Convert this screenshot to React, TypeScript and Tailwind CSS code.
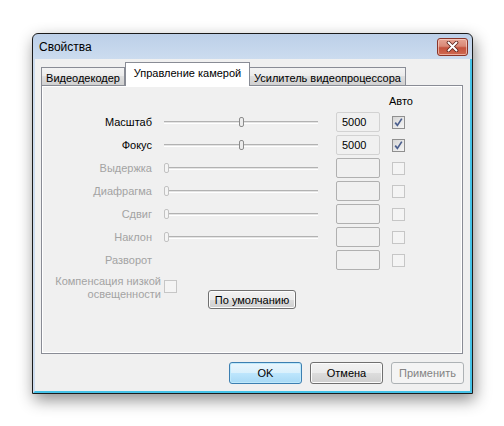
import React from "react";

interface RowInterface {
    label: string;
    enabled: boolean;
    slider: boolean;
    value?: string;
    thumb?: number;
    checked?: boolean;
}

const rows: RowInterface[] = [
    { label: "Масштаб", enabled: true, slider: true, value: "5000", thumb: 75, checked: true },
    { label: "Фокус", enabled: true, slider: true, value: "5000", thumb: 75, checked: true },
    { label: "Выдержка", enabled: false, slider: true },
    { label: "Диафрагма", enabled: false, slider: true },
    { label: "Сдвиг", enabled: false, slider: true },
    { label: "Наклон", enabled: false, slider: true },
    { label: "Разворот", enabled: false, slider: false },
];

const CheckBox = ({ checked, enabled }: { checked?: boolean; enabled: boolean }) => {
    if (!enabled) {
        return <div className="w-[13px] h-[13px] border border-[#c6c6c6] bg-[#f4f4f4]" />;
    }
    return (
        <div className="w-[13px] h-[13px] border border-[#8f8f8f] bg-gradient-to-br from-[#d6d6d6] to-[#f6f6f6] flex items-center justify-center">
            {checked && (
                <svg width="11" height="11" viewBox="0 0 11 11">
                    <path d="M2.2 5.6 L4.4 8.4 L8.8 1.6" fill="none" stroke="#4b5f8e" strokeWidth="1.7" />
                </svg>
            )}
        </div>
    );
};

const Slider = ({ thumb, enabled }: { thumb: number; enabled: boolean }) => (
    <div className="relative w-[154px] h-[20px] flex items-center">
        <div className="w-full h-[3px] border-t border-t-[#b2b2b2] border-b border-b-white bg-[#e4e4e4]" />
        {/* ползунок */}
        <div
            className={
                "absolute top-[5px] w-[5px] h-[10px] rounded-[2px] border " +
                (enabled ? "border-[#8c8c8c] bg-[#ececec]" : "border-[#c2c2c2] bg-[#f4f4f4]")
            }
            style={{ left: thumb }}
        />
    </div>
);

const WinButton = ({ label, kind, className }: { label: string; kind: "normal" | "default" | "disabled"; className?: string }) => {
    const look =
        kind === "default"
            ? "border-[#3c7fb1] bg-[linear-gradient(#eaf6fd_0%,#d9f0fc_50%,#bee6fd_50%,#a7d9f5_100%)] text-black shadow-[inset_0_0_0_1px_#bfe9fb]"
            : kind === "disabled"
            ? "border-[#adb2b5] bg-[#f4f4f4] text-[#838383]"
            : "border-[#707070] bg-[linear-gradient(#f2f2f2_0%,#ebebeb_50%,#dddddd_50%,#cfcfcf_100%)] text-black shadow-[inset_0_0_0_1px_#fcfcfc]";
    return (
        <div className={"flex items-center justify-center whitespace-nowrap border rounded-[3px] leading-[14px] " + look + " " + (className ?? "")}>
            {label}
        </div>
    );
};

const tabLook = "border border-b-0 border-[#898c95] flex justify-center pt-[3px] leading-[14px] whitespace-nowrap text-black";
const tabIdle = "h-[18px] bg-[linear-gradient(#f3f3f3_0%,#ebebeb_50%,#dedede_50%,#d0d0d0_100%)]";

const App = () => {
    return (
        <div className="w-[504px] h-[426px] bg-white pt-[33px] pl-[32px] font-['Liberation_Sans',Arial,sans-serif] text-[11px] overflow-hidden">
            <div className="w-[441px] h-[361px] border border-[#1b1b1b] rounded-t-[6px] bg-[linear-gradient(#bccfe8,#d5e3f3_40px)] shadow-[2px_6px_16px_rgba(0,0,0,0.45)] flex flex-col">
                {/* Заголовок */}
                <div className="h-[25px] flex items-center pl-[6px] pr-[4px]">
                    <span className="text-black text-[12px] leading-[14px]">Свойства</span>
                    <div className="ml-auto w-[31px] h-[18px] rounded-[3px] border border-[#8a3529] bg-[linear-gradient(#e6a595_0%,#d98876_45%,#c4523d_55%,#cf6a52_100%)] shadow-[inset_0_0_0_1px_rgba(255,220,210,0.6)] flex items-center justify-center">
                        <svg width="13" height="11" viewBox="0 0 13 11">
                            <path d="M2.5 1.5 L10.5 9.5 M10.5 1.5 L2.5 9.5" stroke="#5a2019" strokeWidth="3.6" strokeLinecap="round" />
                            <path d="M2.5 1.5 L10.5 9.5 M10.5 1.5 L2.5 9.5" stroke="#ffffff" strokeWidth="2" strokeLinecap="round" />
                        </svg>
                    </div>
                </div>

                {/* Клиентская область */}
                <div className="flex-1 flex flex-col bg-[#f0f0f0] border-l-2 border-l-[#cddcee] border-r-2 border-r-[#45c2e7] border-b-2 border-b-[#45c2e7]">
                    {/* Вкладки */}
                    <div className="h-[26px] flex items-end pl-[6px]">
                        <div className={tabLook + " " + tabIdle + " w-[84px]"}>Видеодекодер</div>
                        <div className={tabLook + " relative z-10 w-[125px] h-[24px] -mb-[1px] bg-white"}>Управление камерой</div>
                        <div className={tabLook + " " + tabIdle + " w-[156px] border-l-0"}>Усилитель видеопроцессора</div>
                    </div>

                    {/* Панель */}
                    <div className="ml-[6px] w-[422px] h-[269px] border border-[#898c95] shadow-[inset_0_0_0_1px_#ffffff] pt-[8px]">
                        <div className="h-[14px] leading-[14px] pl-[347px] text-black mb-[4px]">Авто</div>

                        <div className="flex flex-col gap-[3px]">
                            {rows.map((row) => (
                                <div key={row.label} className="flex items-center h-[20px]">
                                    <span className={"w-[110px] text-right leading-[14px] whitespace-nowrap " + (row.enabled ? "text-black" : "text-[#a3a3a3]")}>
                                        {row.label}
                                    </span>
                                    <div className="ml-[12px] w-[154px]">
                                        {row.slider && <Slider thumb={row.thumb ?? 0} enabled={row.enabled} />}
                                    </div>
                                    <div
                                        className={
                                            "ml-[18px] w-[44px] h-[20px] rounded-[2px] border flex items-center pl-[5px] leading-[14px] text-black " +
                                            (row.enabled ? "border-[#d2d2d2]" : "border-[#b0b0b0]")
                                        }
                                    >
                                        {row.value}
                                    </div>
                                    <div className="ml-[12px]">
                                        <CheckBox checked={row.checked} enabled={row.enabled} />
                                    </div>
                                </div>
                            ))}
                        </div>

                        {/* Компенсация */}
                        <div className="mt-[5px] flex items-start">
                            <div className="w-[119px] text-right leading-[13px] whitespace-nowrap text-[#a3a3a3]">
                                Компенсация низкой
                                <br />
                                освещенности
                            </div>
                            <div className="ml-[3px] mt-[5px]">
                                <CheckBox enabled={false} />
                            </div>
                            <WinButton label="По умолчанию" kind="normal" className="ml-[31px] mt-[15px] w-[88px] h-[19px]" />
                        </div>
                    </div>

                    {/* Кнопки */}
                    <div className="mt-[8px] flex justify-end gap-[8px] pr-[6px]">
                        <WinButton label="OK" kind="default" className="w-[73px] h-[22px]" />
                        <WinButton label="Отмена" kind="normal" className="w-[73px] h-[22px]" />
                        <WinButton label="Применить" kind="disabled" className="w-[73px] h-[22px]" />
                    </div>
                </div>
            </div>
        </div>
    );
};

export default App;
